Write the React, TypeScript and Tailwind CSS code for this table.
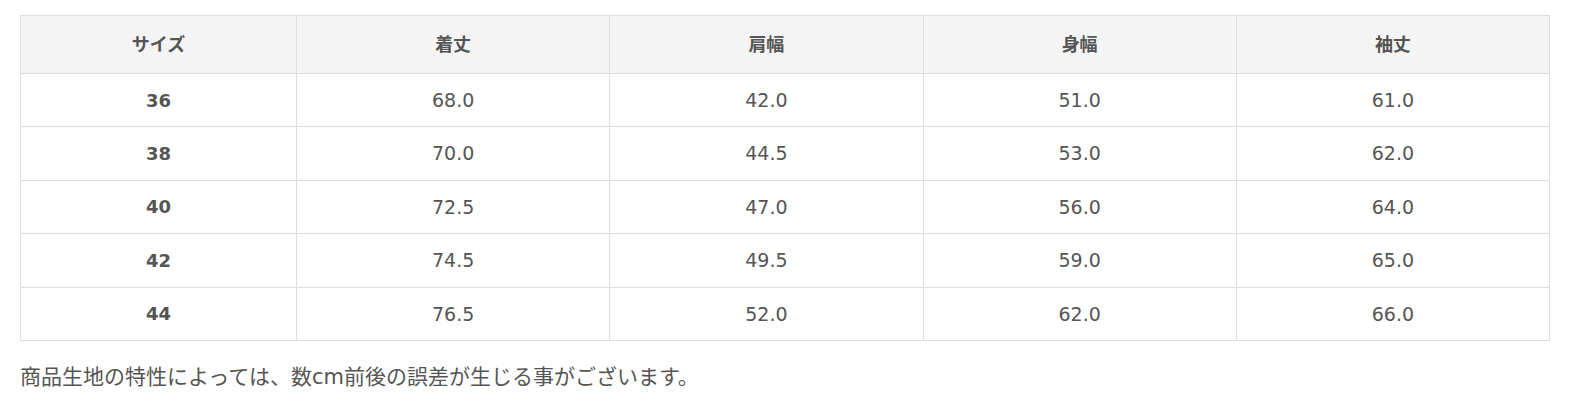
import React from "react";

type Row = {
    size: string;
    length: string;
    shoulder: string;
    chest: string;
    sleeve: string;
};

const rows: Row[] = [
    { size: "36", length: "68.0", shoulder: "42.0", chest: "51.0", sleeve: "61.0" },
    { size: "38", length: "70.0", shoulder: "44.5", chest: "53.0", sleeve: "62.0" },
    { size: "40", length: "72.5", shoulder: "47.0", chest: "56.0", sleeve: "64.0" },
    { size: "42", length: "74.5", shoulder: "49.5", chest: "59.0", sleeve: "65.0" },
    { size: "44", length: "76.5", shoulder: "52.0", chest: "62.0", sleeve: "66.0" },
];

const headers = ["サイズ", "着丈", "肩幅", "身幅", "袖丈"];

const App = () => {
    return (
        <div className="px-5 pt-[15px] bg-white text-[#555] font-['DejaVu_Sans','Noto_Sans_CJK_JP',sans-serif]">
            <table className="w-full border-collapse text-center">
                <thead>
                    <tr className="bg-[#f4f4f4]">
                        {headers.map((h, i) => (
                            <th
                                key={h}
                                className={`h-[58px] border border-[#ddd] text-[18px] font-bold ${
                                    i === 0 ? "w-[276px]" : ""
                                }`}
                            >
                                {h}
                            </th>
                        ))}
                    </tr>
                </thead>
                <tbody>
                    {rows.map((row) => (
                        <tr key={row.size} className="h-[53.4px]">
                            <td className="border border-[#ddd] text-[18px] font-bold">
                                {row.size}
                            </td>
                            <td className="border border-[#ddd] text-[19px]">{row.length}</td>
                            <td className="border border-[#ddd] text-[19px]">{row.shoulder}</td>
                            <td className="border border-[#ddd] text-[19px]">{row.chest}</td>
                            <td className="border border-[#ddd] text-[19px]">{row.sleeve}</td>
                        </tr>
                    ))}
                </tbody>
            </table>
            <p className="mt-[20px] text-[21px] leading-[32px]">
                商品生地の特性によっては、数cm前後の誤差が生じる事がございます。
            </p>
        </div>
    );
};

export default App;
